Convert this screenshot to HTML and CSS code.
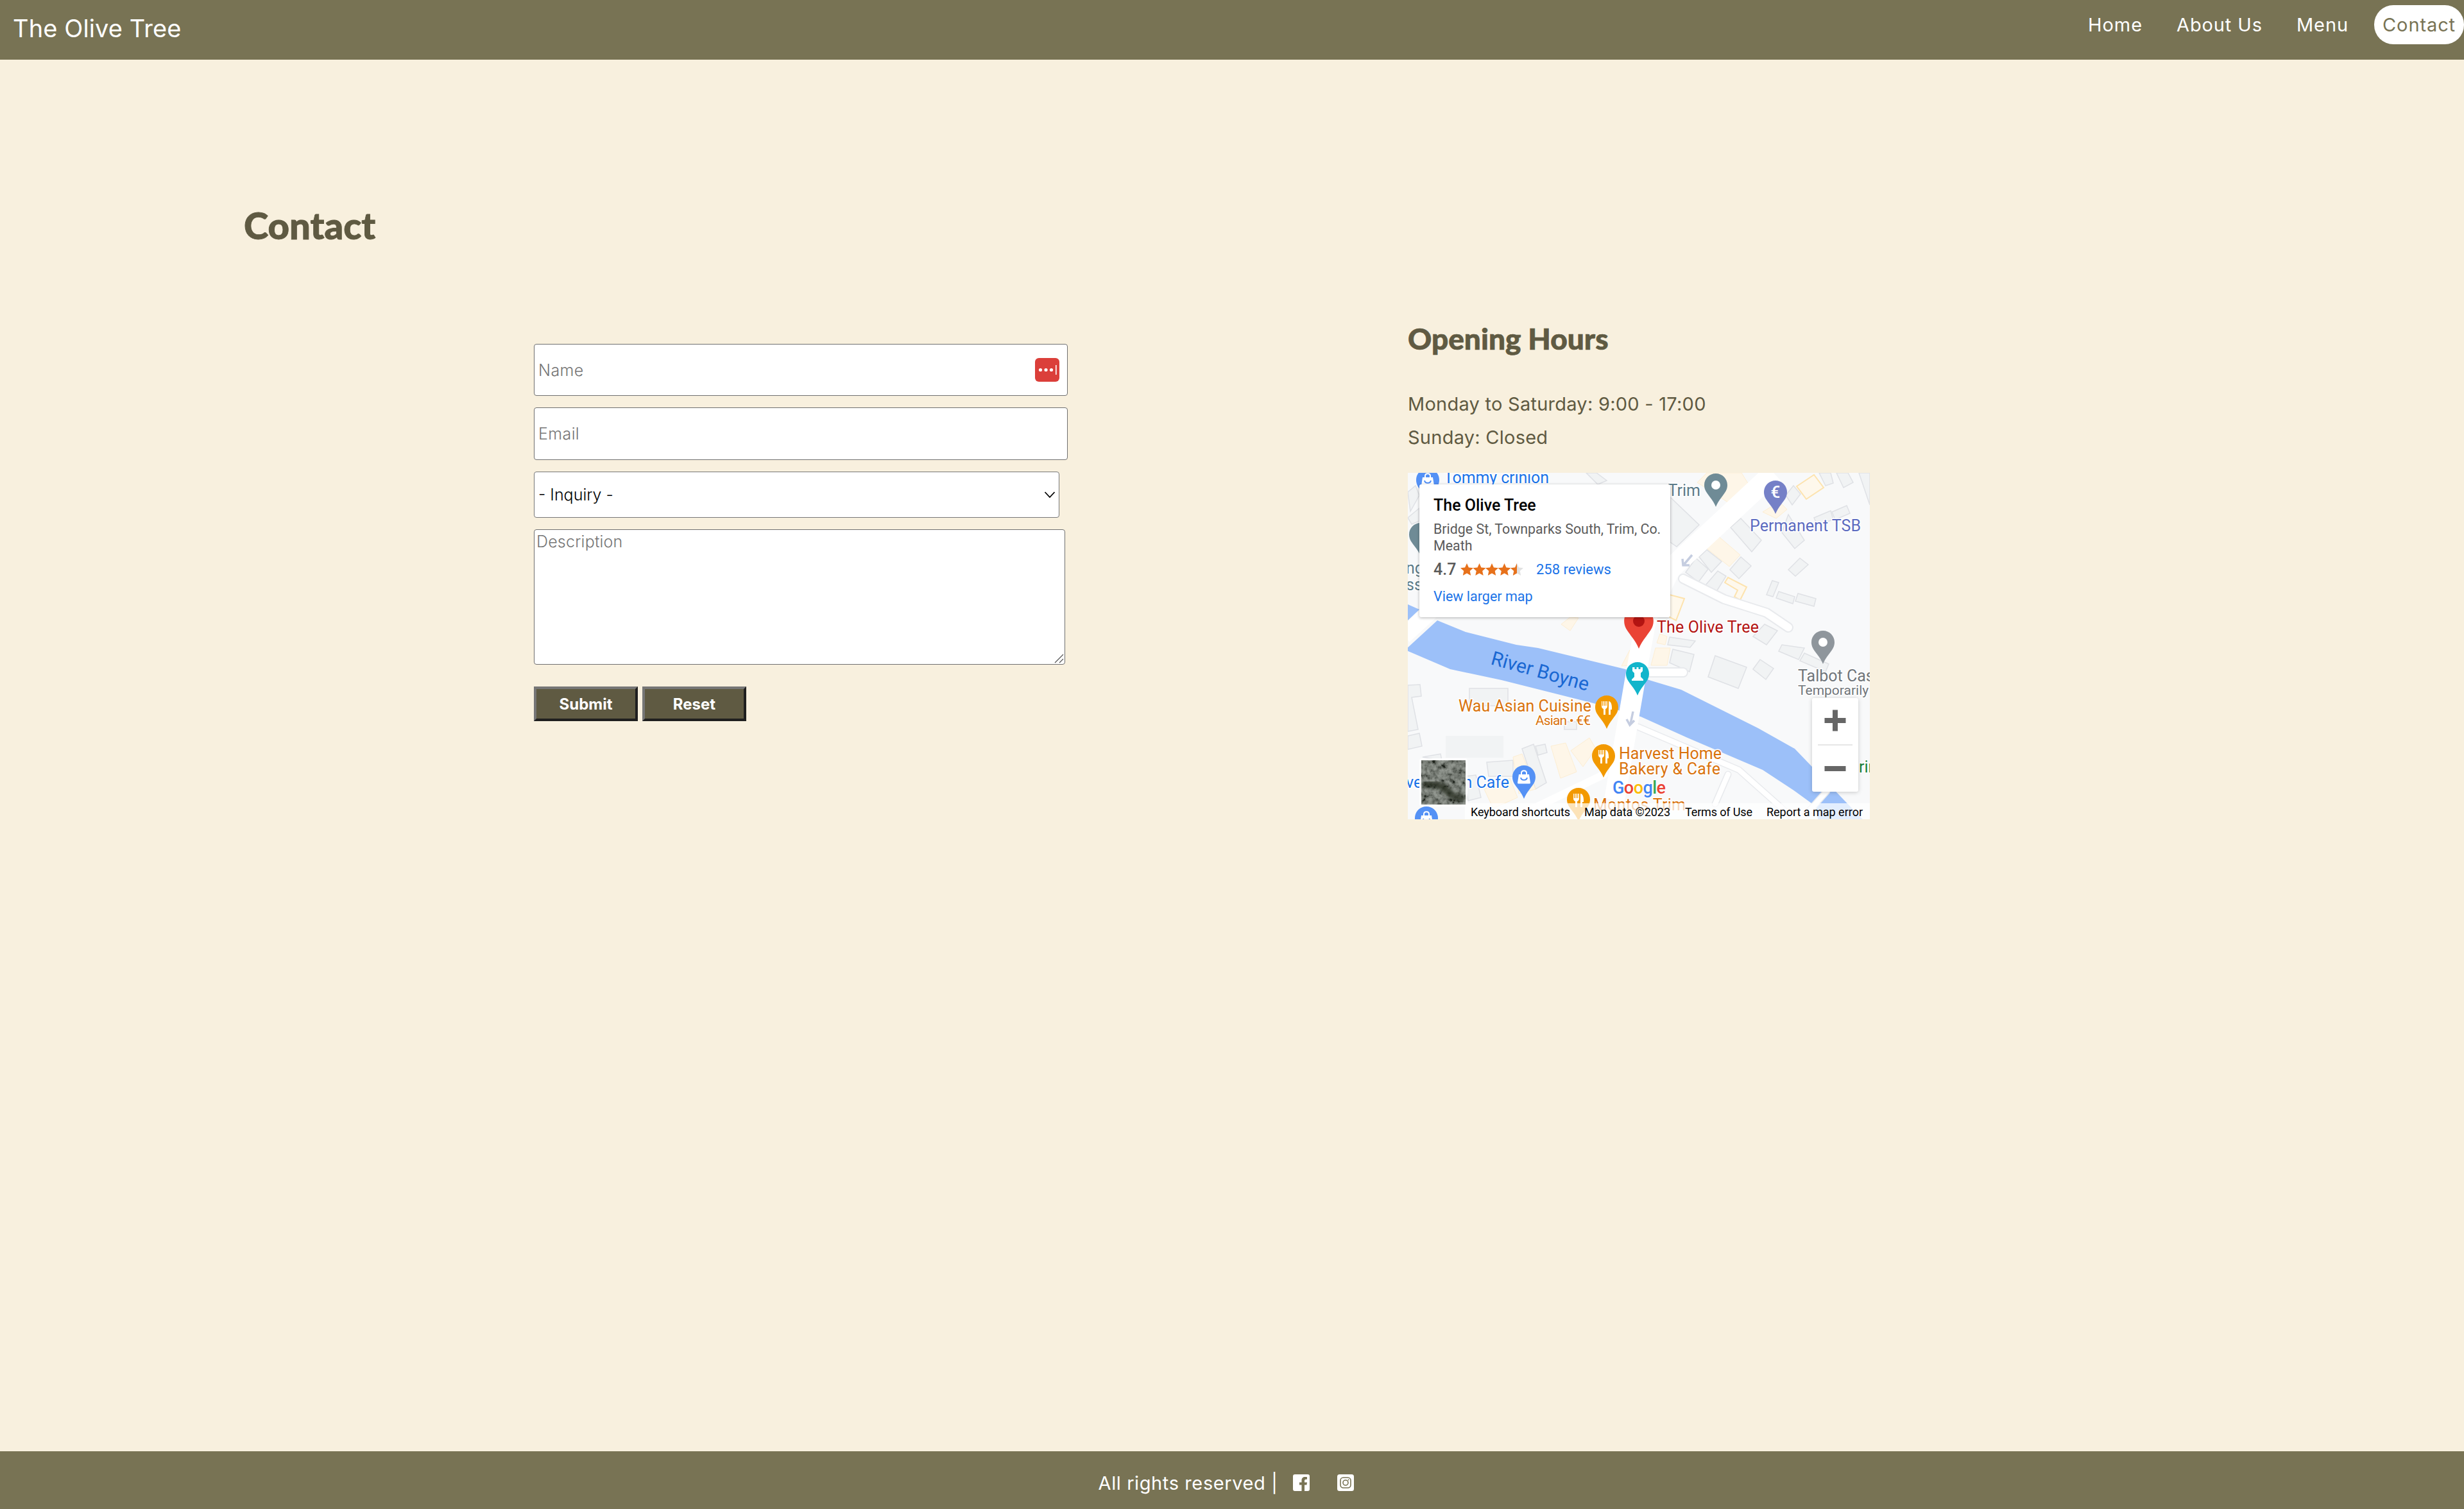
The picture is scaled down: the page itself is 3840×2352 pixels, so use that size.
FILE: index.html
```html
<!DOCTYPE html>
<html lang="en">
<head>
<meta charset="utf-8">
<title>The Olive Tree - Contact</title>
<link rel="stylesheet" href="styles.css">
</head>
<body>
<header class="topbar">
  <a class="brand" href="#">The Olive Tree</a>
  <nav class="nav">
    <a href="#">Home</a>
    <a href="#">About Us</a>
    <a href="#">Menu</a>
    <a class="active" href="#">Contact</a>
  </nav>
</header>

<main class="page">
  <h1 class="page-title">Contact</h1>
  <div class="columns">
    <form class="contact-form">
      <div class="name-wrap">
        <input class="field" type="text" placeholder="Name">
        <svg class="pw-icon" viewBox="0 0 38 37">
          <rect width="38" height="37" rx="6" fill="#db3f3a"/>
          <circle cx="8.5" cy="18.500" r="2.600" fill="#fff"/>
          <circle cx="17" cy="18.500" r="2.600" fill="#fff"/>
          <circle cx="25.500" cy="18.500" r="2.600" fill="#fff"/>
          <rect x="32" y="11" width="1.600" height="15" fill="#fff"/>
        </svg>
      </div>
      <input class="field" type="email" placeholder="Email">
      <div class="select-wrap">
        <select class="inquiry">
          <option>- Inquiry -</option>
        </select>
        <svg class="chevron" viewBox="0 0 18 12"><path d="M1.500 2 9 10l7.500-8" fill="none" stroke="#000" stroke-width="1.800"/></svg>
      </div>
      <div class="desc-wrap">
        <textarea class="description" placeholder="Description"></textarea>
        <svg class="grip" viewBox="0 0 15 15"><path d="M14 1 1 14M14 8l-6 6" fill="none" stroke="#555" stroke-width="1.200"/></svg>
      </div>
      <div class="buttons">
        <button type="submit" class="btn">Submit</button>
        <button type="reset" class="btn">Reset</button>
      </div>
    </form>

    <section class="hours">
      <h2>Opening Hours</h2>
      <p>Monday to Saturday: 9:00 - 17:00</p>
      <p>Sunday: Closed</p>

      <div class="map">
        <svg class="map-svg" viewBox="0 0 720 540">
          <defs>
            <symbol id="pin" viewBox="0 0 36 52">
              <path d="M18 0C8 0 0 8 0 18c0 8 4 12 9 19 4 5 7 10 9 15 2-5 5-10 9-15 5-7 9-11 9-19C36 8 28 0 18 0z"/>
            </symbol>
            <g id="fork">
              <path fill="#fff" d="M10 9v8c0 2 1.500 3.500 3 4v9h3v-9c1.500-.5 3-2 3-4V9h-1.600v7h-1.200V9h-1.400v7h-1.200V9h-1.400v7h-1.200V9z"/>
              <path fill="#fff" d="M21 9c3 0 5 4 5 10v3h-2v8h-3z"/>
            </g>
            <g id="bag">
              <path fill="none" stroke="#fff" stroke-width="2" d="M14 14v-2c0-5 8-5 8 0v2"/>
              <path fill="#fff" d="M10 14h16l2 13a1.500 1.500 0 0 1-1.500 1.500h-17A1.500 1.500 0 0 1 8 27z"/>
              <path fill="none" stroke="#5491f5" stroke-width="2" d="M13 19c1 5 9 5 10 0"/>
            </g>
            <filter id="aerial" x="0" y="0" width="100%" height="100%">
              <feTurbulence type="fractalNoise" baseFrequency="0.13" numOctaves="4" seed="7"/>
              <feColorMatrix values="2 0 0 0 -.45  2 0 0 0 -.45  2 0 0 0 -.45  0 0 0 0 1"/>
            </filter>
            <filter id="soft"><feGaussianBlur stdDeviation="2.500"/></filter>
          </defs>

          <rect class="land" width="720" height="540"/>

          <g class="bld">
            <polygon points="409,38 454,81 419,115 409,108"/>
            <polygon points="433,155 449,133 468,150 453,170"/>
            <polygon points="454,131 466,120 489,138 473,155"/>
            <polygon points="464,175 483,153 496,161 479,188"/>
            <polygon points="502,151 519,131 535,145 516,165"/>
            <polygon points="503,85 519,71 551,105 536,123"/>
            <polygon points="593,151 611,133 624,143 604,161"/>
            <polygon points="559,190 568,168 578,171 569,193"/>
            <polygon points="574,195 578,185 603,193 600,204"/>
            <polygon points="604,200 608,188 636,196 633,208"/>
            <polygon points="583,93 593,65 618,105 603,118"/>
            <polygon points="661,61 684,51 689,63 666,73"/>
            <polygon points="633,70 659,59 663,73 638,81"/>
            <polygon points="589,35 601,20 612,33 599,50"/>
            <polygon points="641,0 659,0 663,16 651,20"/>
            <polygon points="668,0 686,0 694,15 679,23"/>
            <polygon points="703,0 720,0 720,50"/>
            <polygon points="468,318 479,285 528,303 515,336"/>
            <polygon points="538,306 549,291 570,305 558,322"/>
            <polygon points="408,296 413,275 446,283 439,310"/>
            <polygon points="578,278 583,268 618,273 609,291"/>
            <polygon points="611,293 618,281 656,298 651,310"/>
            <polygon points="538,255 556,236 576,246 559,268"/>
            <polygon points="408,256 448,262 440,272 405,268"/>
            <polygon points="96,336 156,336 156,363 96,363"/>
            <polygon points="178,430 196,423 216,483 199,493"/>
            <polygon points="199,426 214,423 217,436 203,440"/>
            <polygon points="123,451 164,448 164,473 126,473"/>
            <polygon points="0,331 19,330 21,348 6,350 16,400 0,403"/>
            <polygon points="0,410 18,406 22,426 0,431"/>
            <polygon points="23,443 51,438 53,448"/>
            <polygon points="89,473 106,471 114,506 94,511"/>
            <polygon points="244,388 263,388 263,400 244,400"/>
            <polygon points="0,30 12,20 18,35 4,60"/>
            <polygon points="0,70 18,55 18,75 6,80"/>
            <polygon points="278,0 294,0 310,12 296,18"/>
          </g>
          <rect class="lot" x="59" y="410" width="90" height="34"/>

          <g class="org">
            <polygon points="466,118 483,98 518,128 501,146"/>
            <polygon points="451,15 466,0 520,0 533,21 499,46"/>
            <polygon points="553,61 579,45 591,57 574,71"/>
            <polygon points="239,236 253,225 266,226 253,246"/>
            <polygon points="333,301 346,276 360,273 350,300"/>
            <polygon points="379,300 386,273 409,273 404,300"/>
            <polygon points="388,265 393,251 404,255 401,268"/>
            <polygon points="223,426 246,421 263,466 238,476"/>
            <polygon points="254,433 283,413 293,430 273,458"/>
            <polygon points="164,443 178,438 199,493 173,500"/>
            <polygon points="119,493 159,476 171,506 133,523"/>
          </g>
          <g class="org-line">
            <polygon points="494,171 499,163 528,178 518,198 509,193 514,183"/>
            <polygon points="606,21 633,3 648,23 621,41"/>
            <polygon points="408,190 431,196 418,230 408,225"/>
          </g>

          <polygon class="water" points="0,205 18,213 0,230"/>
          <polygon class="water" points="46,230 90,248 169,268 203,273 339,306 376,323 426,338 546,398 603,430 699,530 714,545 640,545 636,520 603,496 553,463 436,413 363,380 293,360 146,323 66,306 -4,276"/>

          <g class="road-edge">
            <path d="M429 165 493 197 559 218 593 241"/>
            <path d="M376 311H429"/>
            <path d="M359 396 516 463 580 520 606 545"/>
            <path d="M499 470 479 516"/>
            <path d="M653 496 620 533"/>
            <path d="M306 470 150 545"/>
          </g>
          <g class="road">
            <path class="main" d="M322 510 357 306 372 225 409 150 570 0"/>
            <path d="M429 165 493 197 559 218 593 241"/>
            <path d="M376 311H429"/>
            <path class="thin" d="M359 396 516 463 580 520 606 545"/>
            <path class="thin" d="M499 470 479 516"/>
            <path class="thin" d="M653 496 620 533"/>
            <path d="M306 470 150 545"/>
            <path class="wide" d="M-6 254 40 212"/>
          </g>

          <g class="arrow">
            <path d="M443 128 431 142M428 134l1 10 10 0"/>
            <path d="M351 372 347 391M341 384l5 9 7-7"/>
          </g>

          <use href="#pin" x="462" y="1" width="36" height="52" fill="#6f8b96"/>
          <circle cx="480" cy="19" r="7" fill="#fff"/>
          <use href="#pin" x="555" y="12" width="36" height="52" fill="#7580c7"/>
          <text class="euro" x="573" y="39" text-anchor="middle">€</text>
          <use href="#pin" x="629" y="246" width="36" height="52" fill="#8f969c"/>
          <circle cx="647" cy="264" r="7" fill="#fff"/>
          <use href="#pin" x="2" y="78" width="36" height="52" fill="#6f8b96"/>
          <use href="#pin" x="337" y="208" width="46" height="66" fill="#ea4335"/>
          <circle cx="360" cy="231" r="9" fill="#b31412"/>
          <use href="#pin" x="340" y="295" width="36" height="52" fill="#12b5cb"/>
          <path fill="#fff" transform="translate(340 295)" d="M10 8h3.500v3h3V8h3v3h3V8H26v6l-3 3v6l4 4v2H9v-2l4-4v-6l-3-3z"/>
          <use href="#pin" x="292" y="347" width="36" height="52" fill="#f29900"/>
          <use href="#fork" transform="translate(292 347)"/>
          <use href="#pin" x="287" y="423" width="36" height="52" fill="#f29900"/>
          <use href="#fork" transform="translate(287 423)"/>
          <use href="#pin" x="248" y="491" width="36" height="52" fill="#f29900"/>
          <use href="#fork" transform="translate(248 491)"/>
          <use href="#pin" x="163" y="456" width="36" height="52" fill="#5491f5"/>
          <use href="#bag" transform="translate(163 456)"/>
          <use href="#pin" x="11" y="520" width="36" height="52" fill="#5491f5"/>
          <use href="#bag" transform="translate(11 520)"/>
          <use href="#pin" x="13" y="-7" width="36" height="52" fill="#5491f5"/>
          <use href="#bag" transform="translate(13 -7)"/>

          <g class="lbl">
            <text class="blue" x="56" y="16" textLength="164">Tommy crinion</text>
            <text class="slate" x="456" y="36" text-anchor="end">Trim</text>
            <text class="indigo" x="533" y="91" textLength="173">Permanent TSB</text>
            <text class="red" x="388" y="249" textLength="159">The Olive Tree</text>
            <text class="river" transform="translate(128 298) rotate(15.5)" textLength="157">River Boyne</text>
            <text class="orange" x="79" y="372" textLength="207">Wau Asian Cuisine</text>
            <text class="orange small" x="199" y="393" textLength="86">Asian • €€</text>
            <text class="orange" x="329" y="446" textLength="160">Harvest Home</text>
            <text class="orange" x="329" y="470" textLength="158">Bakery &amp; Cafe</text>
            <text class="orange" x="289" y="526" textLength="144">Montos Trim</text>
            <text class="blue" x="158" y="491" text-anchor="end">n Cafe</text>
            <text class="blue" x="-3" y="491">ve</text>
            <text class="slate" x="-3" y="157">ng</text>
            <text class="slate" x="-3" y="183">ss</text>
            <text class="grey" x="608" y="325">Talbot Castle</text>
            <text class="grey small" x="608" y="346">Temporarily closed</text>
            <text class="green" x="703" y="467">rin</text>
          </g>

          <text class="google" x="319" y="500" textLength="83"><tspan fill="#4285f4">G</tspan><tspan fill="#ea4335">o</tspan><tspan fill="#fbbc04">o</tspan><tspan fill="#4285f4">g</tspan><tspan fill="#34a853">l</tspan><tspan fill="#ea4335">e</tspan></text>

          <rect class="attr-bar" x="89" y="515" width="631" height="25"/>
          <g class="attr">
            <text x="98" y="535" textLength="155">Keyboard shortcuts</text>
            <text x="275" y="535" textLength="134">Map data ©2023</text>
            <text x="432" y="535" textLength="105">Terms of Use</text>
            <text x="559" y="535" textLength="150">Report a map error</text>
          </g>

          <rect class="thumb-frame" x="18" y="445" width="75" height="75" rx="4"/>
          <rect x="21" y="448" width="69" height="69" filter="url(#aerial)"/>
          <rect class="thumb-tint" x="21" y="448" width="69" height="69"/>
          <path class="thumb-river" filter="url(#soft)" d="M24 484 50 487 70 503 87 510"/>

          <rect class="zoom-box" x="630" y="351" width="72" height="146" rx="3"/>
          <path class="zoom-sign" d="M649.500 386h33M666 369.500v33M649.500 461h33"/>
          <path class="zoom-line" d="M639 424h54"/>
        </svg>

        <div class="place-card">
          <div class="place-name">The Olive Tree</div>
          <div class="place-address">Bridge St, Townparks South, Trim, Co. Meath</div>
          <div class="place-rating">
            <span class="score">4.7</span>
            <svg class="stars" viewBox="0 0 98 20">
              <polygon class="star" points="10,0 12.900,6.500 20,7.300 14.700,12 16.200,19 10,15.400 3.800,19 5.300,12 0,7.300 7.100,6.500"/>
              <polygon class="star" transform="translate(19.500 0)" points="10,0 12.900,6.500 20,7.300 14.700,12 16.200,19 10,15.400 3.800,19 5.300,12 0,7.300 7.100,6.500"/>
              <polygon class="star" transform="translate(39 0)" points="10,0 12.900,6.500 20,7.300 14.700,12 16.200,19 10,15.400 3.800,19 5.300,12 0,7.300 7.100,6.500"/>
              <polygon class="star" transform="translate(58.500 0)" points="10,0 12.900,6.500 20,7.300 14.700,12 16.200,19 10,15.400 3.800,19 5.300,12 0,7.300 7.100,6.500"/>
              <polygon class="star-off" transform="translate(78 0)" points="10,0 12.900,6.500 20,7.300 14.700,12 16.200,19 10,15.400 3.800,19 5.300,12 0,7.300 7.100,6.500"/>
              <polygon class="star" transform="translate(78 0)" points="10,0 10,15.400 3.800,19 5.300,12 0,7.300 7.100,6.500"/>
            </svg>
            <a class="place-link reviews" href="#">258 reviews</a>
          </div>
          <a class="place-link larger" href="#">View larger map</a>
        </div>
      </div>
    </section>
  </div>
</main>

<footer class="footer">
  <span class="rights">All rights reserved |</span>
  <a class="social" href="#">
    <svg viewBox="0 0 26 26"><path fill="#fff" d="M3 0h20a3 3 0 0 1 3 3v20a3 3 0 0 1-3 3h-5v-9.500h3.400l.6-4H18V10c0-1.200.6-2.200 2.300-2.200H22V4.300c-.9-.1-2-.3-3-.3-3.600 0-5.500 2-5.500 5.400v3.100H10v4h3.500V26H3a3 3 0 0 1-3-3V3a3 3 0 0 1 3-3z"/></svg>
  </a>
  <a class="social" href="#">
    <svg viewBox="0 0 26 26">
      <rect width="26" height="26" rx="3.500" fill="#fff"/>
      <rect x="5" y="5" width="16" height="16" rx="4.500" fill="none" stroke="#787354" stroke-width="1.600"/>
      <circle cx="13" cy="13" r="4" fill="none" stroke="#787354" stroke-width="1.600"/>
      <circle cx="17.500" cy="8.500" r="1" fill="#787354"/>
    </svg>
  </a>
</footer>
</body>
</html>
```

FILE: styles.css
```css
*{
    box-sizing: border-box;
}
html, body{
    margin: 0;
    height: 100%;
}
body{
    display: flex;
    flex-direction: column;
    min-height: 100vh;
    background-color: #f8f0de;
    color: #5f5a42;
    font-family: "Inter", "Liberation Sans", sans-serif;
}
a{
    text-decoration: none;
    color: inherit;
}

/* top bar */
.topbar{
    display: flex;
    justify-content: space-between;
    align-items: flex-start;
    height: 93px;
    background-color: #787354;
    color: #fff;
}
.brand{
    margin: 22px 0 0 20px;
    font-size: 38px;
    line-height: 44px;
    font-weight: 400;
    letter-spacing: .1px;
}
.nav{
    display: flex;
    gap: 27px;
    margin-top: 8px;
    font-size: 29px;
    font-weight: 400;
    letter-spacing: .9px;
}
.nav a{
    display: block;
    height: 61px;
    line-height: 61px;
    padding: 0 13px;
    border-radius: 30px;
}
.nav a.active{
    background-color: #fff;
    color: #787354;
}

/* main */
.page{
    flex: 1;
    padding: 0 0 0 380px;
}
.page-title{
    margin: 0;
    padding-top: 222px;
    font-family: "Lato", sans-serif;
    font-size: 58px;
    line-height: 72px;
    font-weight: 900;
    -webkit-text-stroke: .9px #5f5a42;
}
.columns{
    display: grid;
    grid-template-columns: 1814px 720px;
}

/* form */
.contact-form{
    display: flex;
    flex-direction: column;
    align-items: flex-start;
    padding: 149px 0 0 452px;
    font-family: "Inter", sans-serif;
}
.name-wrap{
    position: relative;
    margin-bottom: 18px;
}
.field{
    display: block;
    width: 832px;
    height: 81px;
    padding: 0 6px;
    border: 1px solid #6f6f6f;
    border-radius: 4px;
    background-color: #fff;
    font-family: inherit;
    font-size: 25px;
    font-weight: 300;
    letter-spacing: .4px;
}
.contact-form > .field{
    height: 82px;
    margin-bottom: 18px;
}
.field::placeholder, .description::placeholder{
    color: #757575;
}
.pw-icon{
    position: absolute;
    top: 22px;
    right: 13px;
    width: 38px;
    height: 37px;
}
.select-wrap{
    position: relative;
    margin-bottom: 18px;
}
.inquiry{
    display: block;
    width: 819px;
    height: 72px;
    padding: 0 6px;
    border: 1px solid #767676;
    border-radius: 4px;
    background-color: #fff;
    color: #000;
    font-family: inherit;
    font-size: 25px;
    font-weight: 300;
    appearance: none;
}
.chevron{
    position: absolute;
    top: 30px;
    right: 6px;
    width: 18px;
    height: 12px;
    pointer-events: none;
}
.desc-wrap{
    position: relative;
}
.description{
    display: block;
    width: 828px;
    height: 211px;
    padding: 3px 3px;
    border: 1px solid #6f6f6f;
    border-radius: 4px;
    background-color: #fff;
    font-family: inherit;
    font-size: 25px;
    font-weight: 300;
    letter-spacing: .2px;
    resize: none;
}
.grip{
    position: absolute;
    right: 2px;
    bottom: 2px;
    width: 15px;
    height: 15px;
    pointer-events: none;
}
.buttons{
    display: flex;
    gap: 7px;
    margin-top: 34px;
}
.btn{
    width: 162px;
    height: 54px;
    border-style: solid;
    border-width: 4px;
    border-color: #767676 #1f1f1f #1f1f1f #767676;
    background-color: #5f5a42;
    color: #fff;
    font-family: inherit;
    font-size: 24px;
    font-weight: 700;
}

/* opening hours */
.hours{
    padding-top: 111px;
}
.hours h2{
    margin: 0 0 46px;
    font-family: "Lato", sans-serif;
    font-size: 46px;
    line-height: 60px;
    font-weight: 900;
    -webkit-text-stroke: .7px #5f5a42;
}
.hours p{
    margin: 0;
    font-size: 29px;
    line-height: 52px;
    font-weight: 400;
    letter-spacing: .25px;
}

/* map */
.map{
    position: relative;
    width: 720px;
    height: 540px;
    margin-top: 29px;
    overflow: hidden;
    font-family: "Roboto", sans-serif;
}
.map-svg{
    display: block;
    width: 720px;
    height: 540px;
    font-family: "Roboto", sans-serif;
}
.land{ fill: #f8f9fa; }
.bld polygon{ fill: #f1f3f4; stroke: #dfe1e5; stroke-width: 1.500; }
.lot{ fill: #f1f3f4; }
.org polygon{ fill: #fef6e8; stroke: #fdeed3; stroke-width: 1; }
.org-line polygon{ fill: #fef8ec; stroke: #fde3ae; stroke-width: 2; }
.water{ fill: #9cc0f9; }
.road-edge path{ fill: none; stroke: #e8eaed; stroke-width: 16; stroke-linecap: round; stroke-linejoin: round; }
.road-edge path:nth-child(n+3){ stroke-width: 11; }
.road path{ fill: none; stroke: #fff; stroke-width: 12; stroke-linecap: round; stroke-linejoin: round; }
.road path.main{ stroke-width: 32; stroke-linecap: butt; }
.road path.thin{ stroke-width: 8; }
.road path.wide{ stroke-width: 26; stroke-linecap: butt; }
.arrow path{ fill: none; stroke: #c5cde0; stroke-width: 3.500; }
.euro{ fill: #fff; font-size: 26px; font-weight: 500; }
.lbl text{
    font-size: 25px;
    stroke: #fff;
    stroke-width: 3px;
    stroke-linejoin: round;
    paint-order: stroke;
}
.lbl text.small{ font-size: 21px; }
.blue{ fill: #1a73e8; }
.slate{ fill: #5b7b88; }
.indigo{ fill: #5c6bc0; }
.red{ fill: #b31412; }
.river{ fill: #1967d2; }
.lbl text.river{ font-size: 30px; stroke-width: 0; }
.orange{ fill: #d9730d; }
.grey{ fill: #70757a; }
.green{ fill: #188038; }
.google{
    font-size: 27px;
    font-weight: 500;
    stroke: #fff;
    stroke-width: 2px;
    paint-order: stroke;
}
.attr-bar{ fill: #fff; fill-opacity: .72; }
.attr text{ font-size: 18px; fill: #000; }
.thumb-frame{ fill: #fff; }
.thumb-tint{ fill: #3a4336; fill-opacity: .55; }
.thumb-river{ fill: none; stroke: #1f261c; stroke-width: 11; stroke-opacity: .75; }
.zoom-box{ fill: #fff; filter: drop-shadow(0 1px 3px rgba(0,0,0,.2)); }
.zoom-sign{ fill: none; stroke: #666; stroke-width: 8; }
.zoom-line{ fill: none; stroke: #e6e6e6; stroke-width: 2; }

/* place card on the map */
.place-card{
    position: absolute;
    top: 18px;
    left: 18px;
    width: 391px;
    height: 207px;
    padding: 18px 8px 0 22px;
    border-radius: 3px;
    background-color: #fff;
    box-shadow: 0 1px 4px rgba(0,0,0,.3);
}
.place-name{
    font-size: 25px;
    line-height: 30px;
    font-weight: 500;
    color: #000;
}
.place-address{
    margin-top: 9px;
    font-size: 21.400px;
    line-height: 26px;
    color: #5b5b5b;
}
.place-rating{
    display: flex;
    align-items: center;
    height: 30px;
    margin-top: 9px;
}
.score{
    width: 42px;
    font-size: 25px;
    line-height: 30px;
    font-weight: 500;
    color: #5b5b5b;
}
.stars{
    width: 98px;
    height: 20px;
}
.star{ fill: #e7711b; }
.star-off{ fill: #e1e1e1; }
.place-link{
    color: #1a73e8;
    font-size: 22px;
    line-height: 28px;
}
.reviews{
    margin-left: 20px;
}
.larger{
    display: block;
    margin-top: 13px;
    font-size: 21.500px;
}

/* footer */
.footer{
    display: flex;
    justify-content: center;
    align-items: center;
    height: 90px;
    padding: 8px 18px 0 0;
    background-color: #787354;
    color: #fff;
}
.rights{
    font-size: 29px;
    font-weight: 400;
    letter-spacing: .6px;
}
.social{
    display: block;
    width: 26px;
    height: 26px;
    margin-left: 24px;
}
.social + .social{
    margin-left: 43px;
}
.social svg{
    display: block;
    width: 26px;
    height: 26px;
}
```
